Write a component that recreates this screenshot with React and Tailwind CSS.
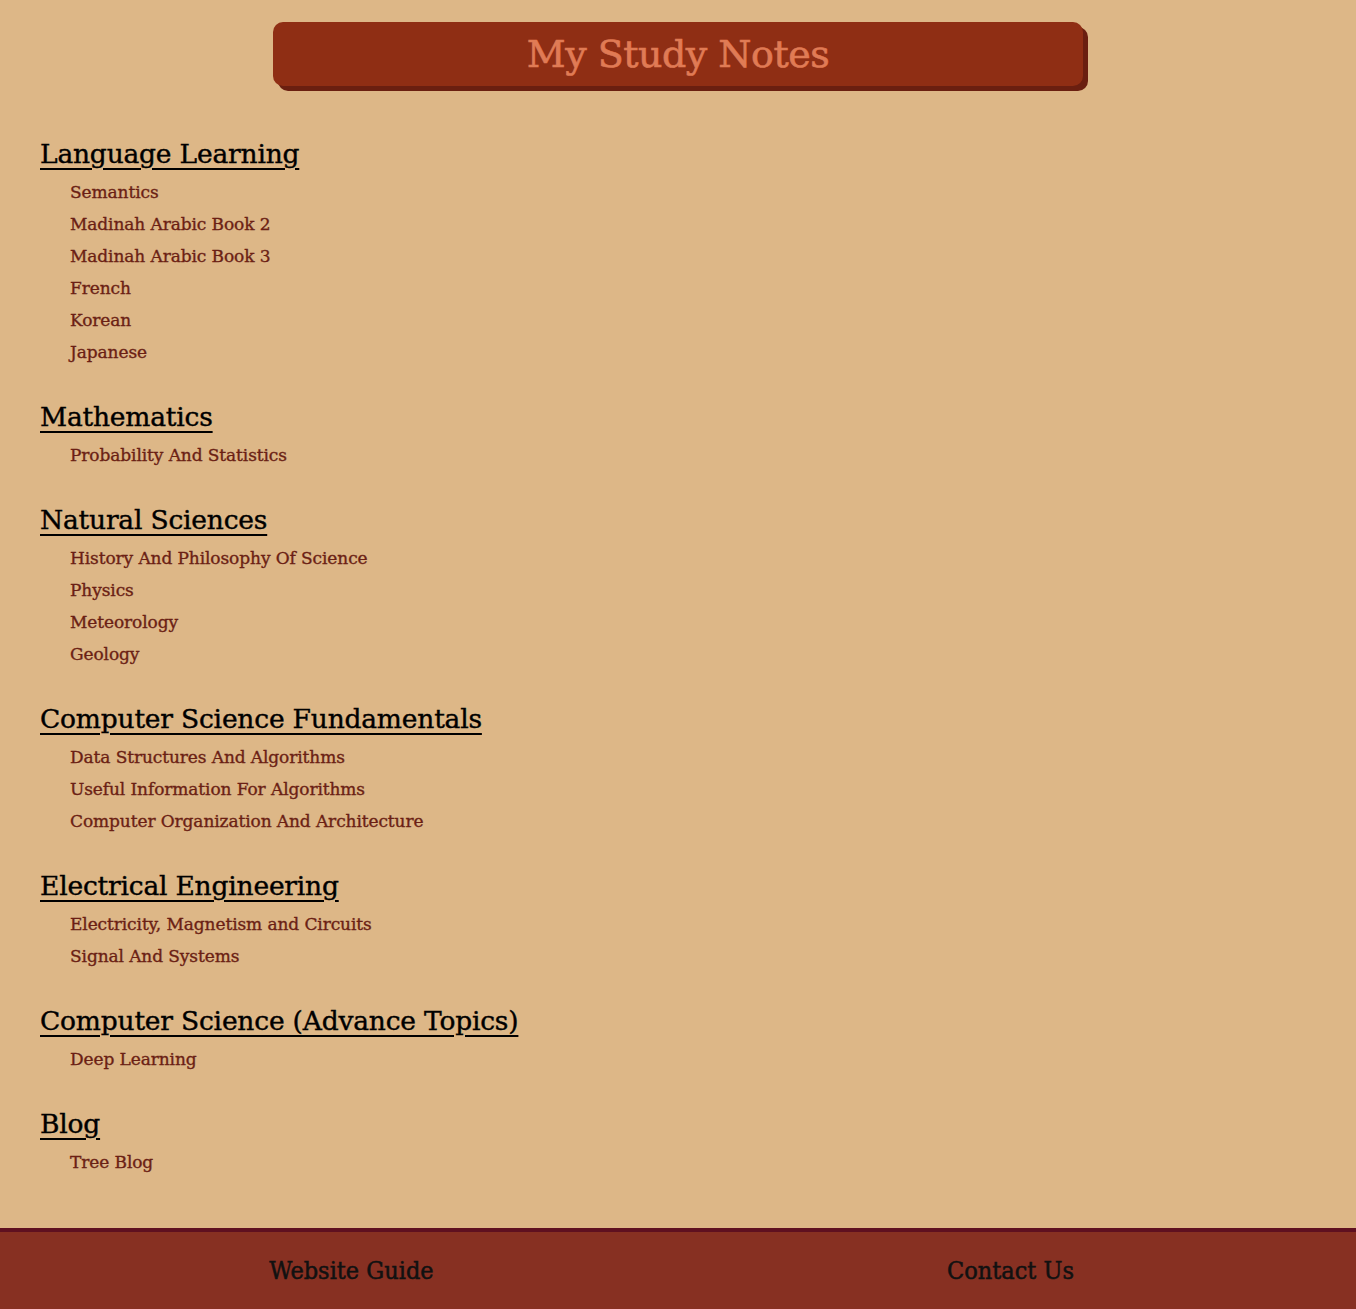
import React from "react";

const sections = [
  {
    title: "Language Learning",
    items: ["Semantics", "Madinah Arabic Book 2", "Madinah Arabic Book 3", "French", "Korean", "Japanese"],
  },
  { title: "Mathematics", items: ["Probability And Statistics"] },
  {
    title: "Natural Sciences",
    items: ["History And Philosophy Of Science", "Physics", "Meteorology", "Geology"],
  },
  {
    title: "Computer Science Fundamentals",
    items: [
      "Data Structures And Algorithms",
      "Useful Information For Algorithms",
      "Computer Organization And Architecture",
    ],
  },
  {
    title: "Electrical Engineering",
    items: ["Electricity, Magnetism and Circuits", "Signal And Systems"],
  },
  { title: "Computer Science (Advance Topics)", items: ["Deep Learning"] },
  { title: "Blog", items: ["Tree Blog"] },
];

export default function StudyNotes() {
  return (
    <div className="min-h-screen bg-[#ddb787] flex flex-col font-['DejaVu_Serif',serif]">
      {/* HEADER */}
      <div className="pt-[22px] flex justify-center">
        <div className="w-[810px] h-[64px] rounded-[10px] bg-[#8f2e14] shadow-[5px_5px_0_#6a1f10] flex items-center justify-center">
          <h1 className="text-[38px] leading-none text-[#e07b55] tracking-[-0.5px] [-webkit-text-stroke:0.6px_#e07b55]">
            My Study Notes
          </h1>
        </div>
      </div>

      {/* SECTIONS */}
      <main className="flex-1 pl-[40px] pt-[51px] pb-[37px] flex flex-col gap-[32px]">
        {sections.map((s) => (
          <section key={s.title}>
            <h2 className="text-[26.5px] leading-[34px] text-black underline underline-offset-[5px] decoration-[2px] tracking-[-0.2px] [-webkit-text-stroke:0.4px_#000]">
              {s.title}
            </h2>
            <ul className="mt-[5px] pl-[30px]">
              {s.items.map((it) => (
                <li
                  key={it}
                  className="text-[17px] leading-[32px] text-[#6b1f14] tracking-[-0.1px] [-webkit-text-stroke:0.35px_#6b1f14]"
                >
                  {it}
                </li>
              ))}
            </ul>
          </section>
        ))}
      </main>

      {/* FOOTER */}
      <footer className="h-[81px] bg-[#873022] border-t-4 border-[#5f1020] grid grid-cols-2 pl-[22px] pr-[16px] items-center font-['DejaVu_Serif_Condensed',serif]">
        <div className="text-center text-[25px] text-[#111] [-webkit-text-stroke:0.5px_#111]">Website Guide</div>
        <div className="text-center text-[25px] text-[#111] [-webkit-text-stroke:0.5px_#111]">Contact Us</div>
      </footer>
    </div>
  );
}
